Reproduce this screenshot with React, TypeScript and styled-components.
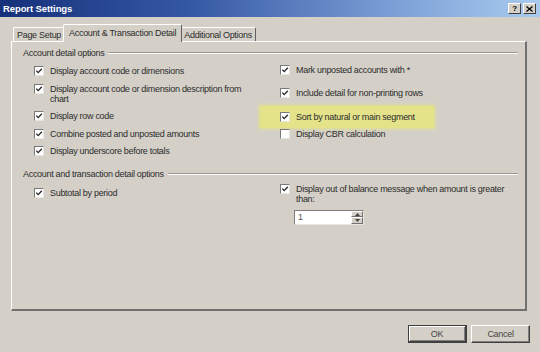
import styled, { createGlobalStyle } from "styled-components";

const GlobalStyle = createGlobalStyle`
  html, body {
    margin: 0;
    padding: 0;
    background: #d4d0c8;
  }
  body {
    font-family: "Liberation Sans", Arial, sans-serif;
    font-size: 9px;
    letter-spacing: -0.3px;
    color: #2c2c2c;
  }
`;

const leftItems = [
    { label: ["Display account code or dimensions"], checked: true },
    { label: ["Display account code or dimension description from", "chart"], checked: true },
    { label: ["Display row code"], checked: true },
    { label: ["Combine posted and unposted amounts"], checked: true },
    { label: ["Display underscore before totals"], checked: true }
];

const rightItems = [
    { label: "Mark unposted accounts with *", checked: true, top: 6 },
    { label: "Include detail for non-printing rows", checked: true, top: 12.7 },
    { label: "Sort by natural or main segment", checked: true, top: 14, highlight: true },
    { label: "Display CBR calculation", checked: false, top: 7.3 }
];

function CheckBox({ checked }: { checked: boolean }) {
    return (
        <Box>
            {checked && (
                <svg width="8" height="8" viewBox="0 0 8 8">
                    <path d="M1.3 3.6 L3.2 5.6 L6.8 1.8" fill="none" stroke="#222" strokeWidth="1.3" />
                </svg>
            )}
        </Box>
    );
}

function App() {
    return (
        <>
            <GlobalStyle />
            <Window>
                <TitleBar>
                    <Title>Report Settings</Title>
                    <CaptionButtons>
                        <CaptionButton>?</CaptionButton>
                        <CaptionButton>
                            <svg width="7" height="6" viewBox="0 0 7 6">
                                <path d="M0.5 0.5 L6.5 5.5 M6.5 0.5 L0.5 5.5" stroke="#000" strokeWidth="1.3" />
                            </svg>
                        </CaptionButton>
                    </CaptionButtons>
                </TitleBar>

                <Body>
                    <TabStrip>
                        <Tab>Page Setup</Tab>
                        <Tab $active>Account &amp; Transaction Detail</Tab>
                        <Tab>Additional Options</Tab>
                    </TabStrip>

                    <Panel>
                        <Group>
                            <GroupHeader>
                                <GroupLabel>Account detail options</GroupLabel>
                                <Etch />
                            </GroupHeader>
                            <Columns>
                                <Column $gap={7.6} $top={7}>
                                    {leftItems.map((item, index) => (
                                        <Item key={index}>
                                            <CheckBox checked={item.checked} />
                                            <ItemText>
                                                {item.label.map((line, i) => (
                                                    <div key={i}>{line}</div>
                                                ))}
                                            </ItemText>
                                        </Item>
                                    ))}
                                </Column>
                                <Column $gap={0} $top={0}>
                                    {rightItems.map((item, index) =>
                                        item.highlight ? (
                                            <Highlight key={index} $top={item.top}>
                                                <Item>
                                                    <CheckBox checked={item.checked} />
                                                    <ItemText>{item.label}</ItemText>
                                                </Item>
                                            </Highlight>
                                        ) : (
                                            <Item key={index} $top={item.top}>
                                                <CheckBox checked={item.checked} />
                                                <ItemText>{item.label}</ItemText>
                                            </Item>
                                        )
                                    )}
                                </Column>
                            </Columns>
                        </Group>

                        <Group $top={11.6}>
                            <GroupHeader>
                                <GroupLabel>Account and transaction detail options</GroupLabel>
                                <Etch />
                            </GroupHeader>
                            <Columns>
                                <Column $gap={0} $top={8.3}>
                                    <Item>
                                        <CheckBox checked />
                                        <ItemText>Subtotal by period</ItemText>
                                    </Item>
                                </Column>
                                <Column $gap={0} $top={4}>
                                    <Item>
                                        <CheckBox checked />
                                        <ItemText>
                                            Display out of balance message when amount is greater
                                            <br />
                                            than:
                                        </ItemText>
                                    </Item>
                                    <SpinBox>
                                        <SpinValue>1</SpinValue>
                                        <SpinButtons>
                                            <SpinButton>
                                                <svg width="5" height="3" viewBox="0 0 5 3">
                                                    <path d="M0 3 L2.5 0 L5 3 Z" fill="#444" />
                                                </svg>
                                            </SpinButton>
                                            <SpinButton>
                                                <svg width="5" height="3" viewBox="0 0 5 3">
                                                    <path d="M0 0 L2.5 3 L5 0 Z" fill="#444" />
                                                </svg>
                                            </SpinButton>
                                        </SpinButtons>
                                    </SpinBox>
                                </Column>
                            </Columns>
                        </Group>
                    </Panel>

                    <Footer>
                        <Button $default>OK</Button>
                        <Button>Cancel</Button>
                    </Footer>
                </Body>
            </Window>
        </>
    );
}

const Window = styled.div`
  width: 540px;
  height: 352px;
  display: flex;
  flex-direction: column;
  background: #d4d0c8;
  overflow: hidden;
`;

const TitleBar = styled.div`
  height: 17px;
  flex: 0 0 auto;
  display: flex;
  align-items: center;
  justify-content: space-between;
  padding: 0 4px 0 3px;
  background: linear-gradient(to right, #16307a 0%, #3558a4 35%, #7fa3d8 75%, #a9cbef 100%);
`;

const Title = styled.div`
  color: #fff;
  font-weight: bold;
  font-size: 9.5px;
  letter-spacing: -0.1px;
`;

const CaptionButtons = styled.div`
  display: flex;
  gap: 2px;
`;

const CaptionButton = styled.div`
  width: 13px;
  height: 11px;
  box-sizing: border-box;
  background: #d4d0c8;
  border-top: 1px solid #fff;
  border-left: 1px solid #fff;
  border-right: 1px solid #404040;
  border-bottom: 1px solid #404040;
  display: flex;
  align-items: center;
  justify-content: center;
  font-weight: bold;
  font-size: 8px;
  color: #000;
  line-height: 1;
`;

const Body = styled.div`
  flex: 1;
  display: flex;
  flex-direction: column;
  padding: 7px 10px 0 11px;
`;

const TabStrip = styled.div`
  display: flex;
  align-items: flex-end;
  height: 17px;
  padding-left: 2px;
`;

const Tab = styled.div<{ $active?: boolean }>`
  position: relative;
  z-index: ${(p) => (p.$active ? 2 : 1)};
  box-sizing: border-box;
  height: ${(p) => (p.$active ? "18px" : "14px")};
  margin: ${(p) => (p.$active ? "0 -2px -1px" : "0")};
  padding: ${(p) => (p.$active ? "0 5px" : "0 3px")};
  padding-bottom: ${(p) => (p.$active ? "2px" : "0")};
  display: flex;
  align-items: center;
  white-space: nowrap;
  background: #d4d0c8;
  border-top: 1px solid #fff;
  border-left: 1px solid #fff;
  border-right: 1px solid #606060;
  border-radius: 2px 2px 0 0;
`;

const Panel = styled.div`
  height: 270px;
  margin-right: 3px;
  box-sizing: border-box;
  border-top: 1px solid #fff;
  border-left: 1px solid #fff;
  border-right: 2px solid #707070;
  border-bottom: 2px solid #707070;
  padding: 5px 7px 0 11px;
`;

const Group = styled.div<{ $top?: number }>`
  margin-top: ${(p) => p.$top ?? 0}px;
`;

const GroupHeader = styled.div`
  display: flex;
  align-items: center;
  gap: 4px;
  height: 12px;
`;

const GroupLabel = styled.div`
  white-space: nowrap;
  line-height: 12px;
`;

const Etch = styled.div`
  flex: 1;
  height: 0;
  border-top: 1px solid #9a9890;
  border-bottom: 1px solid #fff;
`;

const Columns = styled.div`
  display: grid;
  grid-template-columns: 246px 1fr;
  padding-left: 11px;
`;

const Column = styled.div<{ $gap: number; $top: number }>`
  display: flex;
  flex-direction: column;
  align-items: flex-start;
  gap: ${(p) => p.$gap}px;
  padding-top: ${(p) => p.$top}px;
`;

const Item = styled.div<{ $top?: number }>`
  display: flex;
  align-items: flex-start;
  gap: 6px;
  margin-top: ${(p) => p.$top ?? 0}px;
`;

const ItemText = styled.div`
  line-height: 10px;
  white-space: nowrap;
`;

const Highlight = styled.div<{ $top: number }>`
  margin: ${(p) => p.$top - 6}px -19px -6px -20px;
  padding: 6px 19px 6px 20px;
  background: #e4e38a;
  box-shadow: 0 0 3px 1px #e4e38a;
`;

const Box = styled.div`
  width: 10px;
  height: 10px;
  flex: 0 0 auto;
  box-sizing: border-box;
  background: #fff;
  border-top: 1px solid #7a7a7a;
  border-left: 1px solid #7a7a7a;
  border-right: 1px solid #e8e6e0;
  border-bottom: 1px solid #e8e6e0;
  display: flex;
  align-items: center;
  justify-content: center;
`;

const SpinBox = styled.div`
  margin: 6px 0 0 14px;
  width: 70px;
  height: 15px;
  box-sizing: border-box;
  display: flex;
  background: #fff;
  border-top: 1px solid #808080;
  border-left: 1px solid #808080;
  border-right: 1px solid #e8e6e0;
  border-bottom: 1px solid #e8e6e0;
`;

const SpinValue = styled.div`
  flex: 1;
  padding-left: 3px;
  line-height: 13px;
  color: #555;
`;

const SpinButtons = styled.div`
  width: 12px;
  display: flex;
  flex-direction: column;
`;

const SpinButton = styled.div`
  flex: 1;
  box-sizing: border-box;
  background: #d4d0c8;
  border-top: 1px solid #fff;
  border-left: 1px solid #fff;
  border-right: 1px solid #707070;
  border-bottom: 1px solid #707070;
  display: flex;
  align-items: center;
  justify-content: center;
`;

const Footer = styled.div`
  display: flex;
  justify-content: flex-end;
  gap: 4px;
  padding-top: 14px;
`;

const Button = styled.div<{ $default?: boolean }>`
  width: 59px;
  height: 18px;
  box-sizing: border-box;
  display: flex;
  align-items: center;
  justify-content: center;
  color: #444;
  background: #d4d0c8;
  border-top: 1px solid ${(p) => (p.$default ? "#404040" : "#fff")};
  border-left: 1px solid ${(p) => (p.$default ? "#404040" : "#fff")};
  border-right: ${(p) => (p.$default ? "2px" : "1px")} solid #404040;
  border-bottom: ${(p) => (p.$default ? "2px" : "1px")} solid #404040;
  box-shadow: ${(p) => (p.$default ? "inset 1px 1px 0 #fff, inset -1px -1px 0 #808080" : "inset -1px -1px 0 #808080")};
`;

export default App;
